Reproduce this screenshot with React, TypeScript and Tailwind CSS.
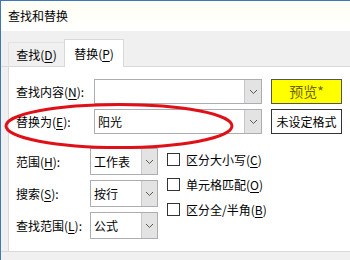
import React from "react";

const F = { fontFamily: '"Noto Sans CJK SC", "Noto Sans", sans-serif' };

function U({ c }: { c: string }) {
  return <span className="underline underline-offset-[2px] decoration-[1px]">{c}</span>;
}

function Chevron() {
  return (
    <svg width="9" height="6" viewBox="0 0 9 6">
      <path d="M1 1 L4.5 4.5 L8 1" fill="none" stroke="#5a5a5a" strokeWidth="1" />
    </svg>
  );
}

function Combo({ w, h, text, arrowW }: { w: number; h: number; text: string; arrowW: number }) {
  return (
    <div className="flex border border-[#abadb3] bg-white" style={{ width: w, height: h }}>
      <div className="flex-1 flex items-center pl-[3px] text-[12px] text-black">{text}</div>
      <div
        className="flex items-center justify-center bg-[#e3e3e3] border-l border-[#c8c8c8]"
        style={{ width: arrowW }}
      >
        <Chevron />
      </div>
    </div>
  );
}

function Check({ children }: { children: React.ReactNode }) {
  return (
    <div className="flex items-center h-[25px]">
      <div className="w-[13px] h-[13px] border border-[#333] bg-white" />
      <div className="ml-[6px] text-[12px] text-black">{children}</div>
    </div>
  );
}

export default function App() {
  return (
    <div
      className="relative w-[350px] h-[260px] overflow-hidden bg-white border-t border-l border-[#3d78b8] flex flex-col"
      style={F}
    >
      {/* title */}
      <div className="h-[30px] flex items-center pl-[7px] text-[12px] text-black bg-gradient-to-b from-[#fffef4] to-white">
        查找和替换
      </div>
      {/* tabs strip */}
      <div className="h-[36px] bg-[#f0f0f0] flex items-end pl-[7px] border-b border-[#d9d9d9]">
        <div className="w-[56px] h-[24px] flex items-center justify-center text-[12px] text-black border-t border-l border-[#e2e2e2] bg-[#f0f0f0]">
          查找(<U c="D" />)
        </div>
        <div className="w-[60px] h-[28px] -mb-px flex items-center justify-center text-[12px] text-black bg-white border-t border-l border-r border-[#d9d9d9]">
          替换(<U c="P" />)
        </div>
      </div>
      {/* content */}
      <div className="flex-1 flex bg-[#f0f0f0]">
        <div className="ml-[7px] flex-1 bg-white border-l border-[#d9d9d9] pt-[12px] pl-[7px] flex flex-col">
          <div className="flex items-center h-[25px]">
            <div className="w-[78px] text-[12px] text-black">
              查找内容(<U c="N" />):
            </div>
            <Combo w={168} h={25} text="" arrowW={17} />
            <div className="ml-[9px] w-[71px] h-[25px] bg-[#ffff00] border border-[#555] flex items-center justify-center text-[14px] text-[#6e6400]">
              预览*
            </div>
          </div>
          <div className="flex items-center h-[25px] mt-[5px]">
            <div className="w-[78px] text-[12px] text-black">
              替换为(<U c="E" />):
            </div>
            <Combo w={168} h={25} text="阳光" arrowW={17} />
            <div className="ml-[9px] w-[71px] h-[25px] bg-white border border-[#333] flex items-center justify-center text-[12px] text-black">
              未设定格式
            </div>
          </div>
          <div className="flex mt-[14px]">
            <div className="flex flex-col gap-[5px]">
              <div className="flex items-center h-[27px]">
                <div className="w-[74px] text-[12px] text-black">
                  范围(<U c="H" />):
                </div>
                <Combo w={68} h={27} text="工作表" arrowW={16} />
              </div>
              <div className="flex items-center h-[27px]">
                <div className="w-[74px] text-[12px] text-black">
                  搜索(<U c="S" />):
                </div>
                <Combo w={68} h={27} text="按行" arrowW={16} />
              </div>
              <div className="flex items-center h-[27px]">
                <div className="w-[74px] text-[12px] text-black">
                  查找范围(<U c="L" />):
                </div>
                <Combo w={68} h={27} text="公式" arrowW={16} />
              </div>
            </div>
            <div className="ml-[9px] mt-[-1px] flex flex-col">
              <Check>
                区分大小写(<U c="C" />)
              </Check>
              <Check>
                单元格匹配(<U c="O" />)
              </Check>
              <Check>
                区分全/半角(<U c="B" />)
              </Check>
            </div>
          </div>
        </div>
      </div>
      <div className="h-[9px] bg-[#f0f0f0] border-t border-[#d9d9d9]" />
      {/* red annotation ellipse */}
      <svg
        className="absolute left-0 top-0 pointer-events-none"
        width="350"
        height="260"
        viewBox="0 0 350 260"
      >
        <ellipse cx="118" cy="125" rx="113" ry="21.5" fill="none" stroke="#e01018" strokeWidth="3" />
      </svg>
    </div>
  );
}
